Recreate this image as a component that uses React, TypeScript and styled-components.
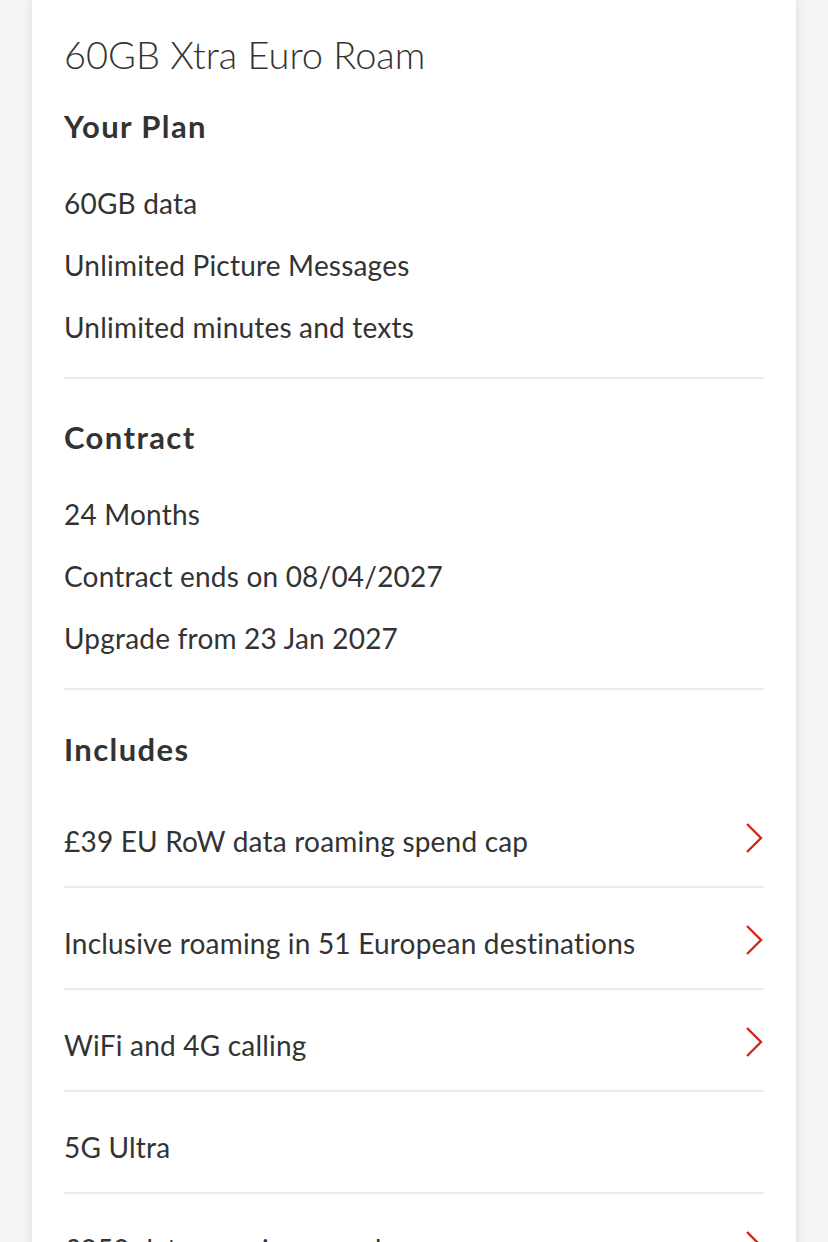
import styled, { createGlobalStyle } from "styled-components"

const GlobalStyle = createGlobalStyle`
	html, body {
		margin: 0;
		padding: 0;
		background: #f4f4f4;
	}
	body {
		font-family: Lato, "Open Sans", sans-serif;
		color: #333333;
		overflow: hidden;
	}
`

const Page = styled.div`
	padding: 0 32px;
	height: 1242px;
	overflow: hidden;
`

const Card = styled.div`
	background: #ffffff;
	box-shadow: 0 0 10px rgba(0, 0, 0, 0.1);
	padding: 30px 32px 0;
	min-height: 1300px;
`

const Title = styled.h1`
	margin: 0;
	font-size: 38px;
	font-weight: 300;
	line-height: 48px;
`

const Section = styled.section<{ $first?: boolean }>`
	padding-top: ${(p) => (p.$first ? "28px" : "38px")};
	padding-bottom: 19px;
	border-bottom: 2px solid #ebebeb;
`

const Heading = styled.h2<{ $tight?: boolean }>`
	margin: 0 0 ${(p) => (p.$tight ? "17px" : "26px")};
	font-size: 31px;
	font-weight: 700;
	letter-spacing: 1.4px;
	line-height: 40px;
`

const Item = styled.p`
	margin: 0;
	font-size: 28px;
	letter-spacing: 0.2px;
	line-height: 62px;
`

const IncludesSection = styled.section`
	padding-top: 39px;
`

const Row = styled.div`
	display: flex;
	align-items: center;
	justify-content: space-between;
	padding: 24px 0 14px;
	border-bottom: 2px solid #ebebeb;
	font-size: 28px;
	letter-spacing: 0.2px;
	line-height: 62px;
`

const Chevron = styled.svg`
	width: 20px;
	height: 32px;
	flex-shrink: 0;
	transform: translateY(-3px);
`

function ChevronRight() {
	return (
		<Chevron viewBox="0 0 20 32" fill="none">
			<polyline points="3,2 17,16 3,30" stroke="#d0261c" strokeWidth="2.4" strokeLinejoin="miter" />
		</Chevron>
	)
}

const includes = [
	{ label: "£39 EU RoW data roaming spend cap", link: true },
	{ label: "Inclusive roaming in 51 European destinations", link: true },
	{ label: "WiFi and 4G calling", link: true },
	{ label: "5G Ultra", link: false },
	{ label: "£250 data roaming spend cap", link: true },
]

export default function App() {
	return (
		<>
			<GlobalStyle />
			<Page>
				<Card>
					<Title>60GB Xtra Euro Roam</Title>
					<Section $first>
						<Heading>Your Plan</Heading>
						<Item>60GB data</Item>
						<Item>Unlimited Picture Messages</Item>
						<Item>Unlimited minutes and texts</Item>
					</Section>
					<Section>
						<Heading>Contract</Heading>
						<Item>24 Months</Item>
						<Item>Contract ends on 08/04/2027</Item>
						<Item>Upgrade from 23 Jan 2027</Item>
					</Section>
					<IncludesSection>
						<Heading $tight>Includes</Heading>
						{includes.map((row) => (
							<Row key={row.label}>
								<span>{row.label}</span>
								{row.link && <ChevronRight />}
							</Row>
						))}
					</IncludesSection>
				</Card>
			</Page>
		</>
	)
}
